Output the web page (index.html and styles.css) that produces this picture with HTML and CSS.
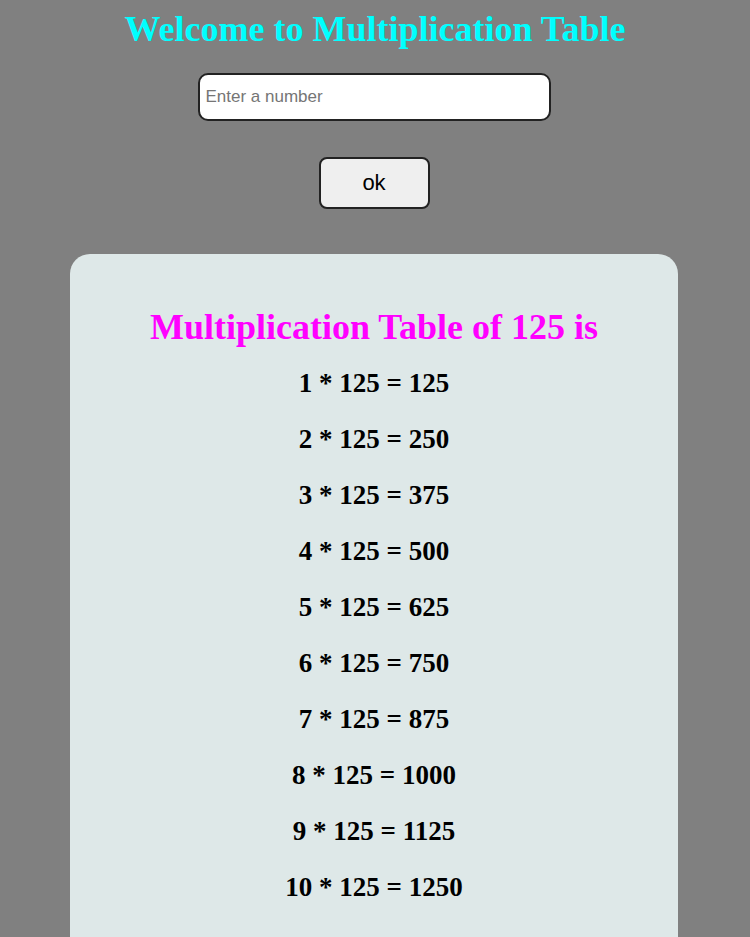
FILE: index.html
```html
<!DOCTYPE html>
<html>
<head>
<meta charset="utf-8">
<link rel="stylesheet" href="styles.css">
</head>
<body>
<h1 class="title">Welcome to Multiplication Table</h1>
<div class="controls">
  <input class="num-input" type="text" placeholder="Enter a number">
  <button class="ok-btn">ok</button>
</div>
<div class="result">
  <h2 class="result-title">Multiplication Table of 125 is</h2>
  <div class="rows">
    <p class="row">1 * 125 = 125</p>
    <p class="row">2 * 125 = 250</p>
    <p class="row">3 * 125 = 375</p>
    <p class="row">4 * 125 = 500</p>
    <p class="row">5 * 125 = 625</p>
    <p class="row">6 * 125 = 750</p>
    <p class="row">7 * 125 = 875</p>
    <p class="row">8 * 125 = 1000</p>
    <p class="row">9 * 125 = 1125</p>
    <p class="row">10 * 125 = 1250</p>
  </div>
</div>
</body>
</html>
```

FILE: styles.css
```css
html, body {
  margin: 0;
  padding: 0;
}
body {
  background: #808080;
  font-family: "Liberation Serif", "Times New Roman", serif;
  text-align: center;
}
.title {
  color: #00ffff;
  font-size: 36px;
  font-weight: bold;
  margin: 0;
  padding-top: 8px;
  line-height: 42px;
}
.controls {
  display: flex;
  flex-direction: column;
  align-items: center;
  gap: 36px;
  margin-top: 23px;
  padding-right: 2px;
}
.num-input {
  box-sizing: border-box;
  width: 353px;
  height: 48px;
  border: 2px solid #222;
  border-radius: 10px;
  background: #fff;
  padding: 0 6px;
  font-family: "Liberation Sans", Arial, sans-serif;
  font-size: 17px;
  outline: none;
}
.num-input::placeholder {
  color: #757575;
}
.ok-btn {
  box-sizing: border-box;
  width: 111px;
  height: 52px;
  border: 2px solid #222;
  border-radius: 8px;
  background: #efefef;
  font-family: "Liberation Sans", Arial, sans-serif;
  font-size: 22px;
  color: #000;
}
.result {
  margin: 45px 72px 0 70px;
  background: #dee8e8;
  border-radius: 20px;
  padding: 50px 0 80px;
}
.result-title {
  color: #ff00ff;
  font-size: 36px;
  font-weight: bold;
  margin: 0 0 17px;
  line-height: 46px;
}
.rows {
  display: flex;
  flex-direction: column;
  gap: 24px;
}
.row {
  margin: 0;
  font-size: 27px;
  font-weight: bold;
  line-height: 32px;
  color: #000;
}
```
